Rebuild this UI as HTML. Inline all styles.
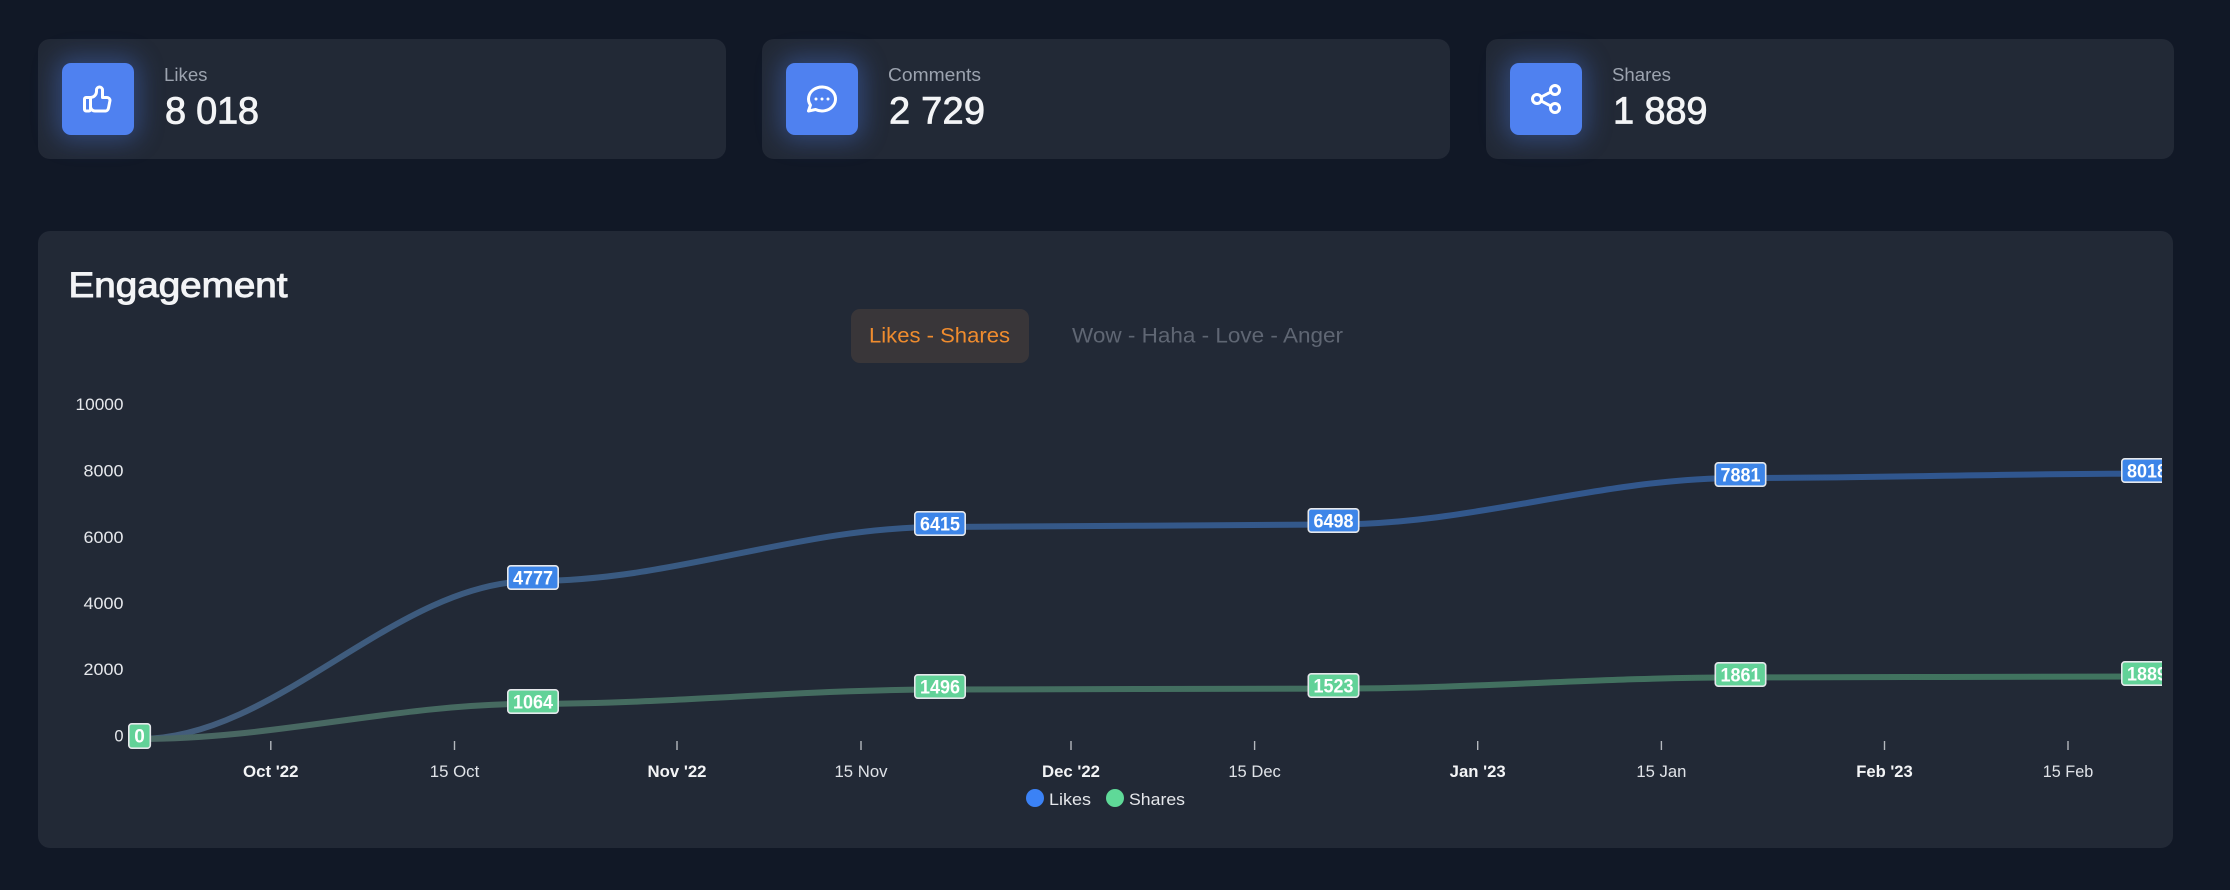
<!DOCTYPE html>
<html lang="en">
<head>
<meta charset="utf-8">
<title>Engagement</title>
<style>
html,body{margin:0;padding:0;background:#111826;}
body{position:relative;width:2230px;height:890px;overflow:hidden;font-family:"Liberation Sans",sans-serif;}
.card{position:absolute;top:39px;width:688px;height:120px;background:#222936;border-radius:12px;}
.ib{position:absolute;left:24px;top:24px;width:72px;height:72px;border-radius:9px;background:#4f81f0;box-shadow:0 0 24px 6px rgba(79,129,240,.34);}
.ib svg{position:absolute;left:18px;top:18px;width:36px;height:36px;fill:none;stroke:#fff;stroke-width:2;stroke-linecap:round;stroke-linejoin:round;}
.panel{position:absolute;left:38px;top:231px;width:2135px;height:617px;background:#222936;border-radius:12px;}
.pill{position:absolute;left:851px;top:309px;width:178px;height:54px;background:#393639;border-radius:9px;}
svg.o{position:absolute;left:0;top:0;width:2230px;height:890px;font-family:"Liberation Sans",sans-serif;}
.lab{font-size:18px;fill:#9ca3af;}
.val{font-size:38px;fill:#f3f4f6;stroke:#f3f4f6;stroke-width:.8px;}
.y{font-size:16.5px;fill:#e5e7eb;text-anchor:end;}
.x{font-size:16.5px;fill:#e0e3e8;text-anchor:middle;}
.xb{font-size:16.5px;font-weight:700;fill:#f3f4f6;text-anchor:middle;}
.dl{font-size:19px;font-weight:700;fill:#fff;text-anchor:middle;}
.leg{font-size:17px;fill:#e5e7eb;}
.bb{fill:#3d85e8;stroke:#e5e7eb;stroke-width:1.6;}
.gb{fill:#62d298;stroke:#e5e7eb;stroke-width:1.6;}
.t{stroke:#b4b8be;stroke-width:1.4;}
</style>
</head>
<body>
<div class="card" style="left:38px"><div class="ib"><svg viewBox="0 0 24 24"><path d="M7 11v8a1 1 0 0 1-1 1h-2a1 1 0 0 1-1-1v-7a1 1 0 0 1 1-1h3a4 4 0 0 0 4-4v-1a2 2 0 0 1 4 0v5h3a2 2 0 0 1 2 2l-1 5a2 3 0 0 1-2 2h-7a3 3 0 0 1-3-3"/></svg></div></div>
<div class="card" style="left:762px"><div class="ib"><svg viewBox="0 0 24 24"><path d="M3 20l1.3-3.9c-2.324-3.437-1.426-7.872 2.1-10.374c3.526-2.501 8.59-2.296 11.845.48c3.255 2.777 3.695 7.266 1.029 10.501c-2.666 3.235-7.615 4.215-11.574 2.293l-4.7 1"/><path d="M12 12v.01M8 12v.01M16 12v.01"/></svg></div></div>
<div class="card" style="left:1486px"><div class="ib"><svg viewBox="0 0 24 24"><circle cx="6" cy="12" r="3"/><circle cx="18" cy="6" r="3"/><circle cx="18" cy="18" r="3"/><path d="M8.7 10.7l6.6-3.4M8.7 13.3l6.6 3.4"/></svg></div></div>
<div class="panel"></div>
<div class="pill"></div>
<svg class="o" viewBox="0 0 2230 890" xmlns="http://www.w3.org/2000/svg">
<defs>
<linearGradient id="gB" gradientUnits="userSpaceOnUse" x1="139" y1="0" x2="2147" y2="0"><stop offset="0" stop-color="#445d7a"/><stop offset=".2" stop-color="#3a5a80"/><stop offset=".5" stop-color="#34588a"/><stop offset="1" stop-color="#2f5690"/></linearGradient>
<linearGradient id="gG" gradientUnits="userSpaceOnUse" x1="139" y1="0" x2="2147" y2="0"><stop offset="0" stop-color="#4a6663"/><stop offset=".2" stop-color="#456b60"/><stop offset="1" stop-color="#40745f"/></linearGradient>
<clipPath id="cl"><rect x="60" y="380" width="2102" height="400"/></clipPath>
</defs>

<text class="lab" x="164" y="81" textLength="43.5" lengthAdjust="spacingAndGlyphs">Likes</text>
<text class="val" x="165" y="123.5" textLength="94" lengthAdjust="spacing">8 018</text>
<text class="lab" x="888" y="81" textLength="93" lengthAdjust="spacingAndGlyphs">Comments</text>
<text class="val" x="889" y="123.5" textLength="96" lengthAdjust="spacing">2 729</text>
<text class="lab" x="1612" y="81" textLength="59" lengthAdjust="spacingAndGlyphs">Shares</text>
<text class="val" x="1613" y="123.5" textLength="94.5" lengthAdjust="spacing">1 889</text>

<text x="68.5" y="297" font-size="35" fill="#f3f4f6" stroke="#f3f4f6" stroke-width="1" textLength="219" lengthAdjust="spacingAndGlyphs">Engagement</text>
<text x="869" y="342.5" font-size="21" fill="#f08c2e" textLength="141" lengthAdjust="spacingAndGlyphs">Likes - Shares</text>
<text x="1072" y="342.5" font-size="21" fill="#5f6673" textLength="271" lengthAdjust="spacingAndGlyphs">Wow - Haha - Love - Anger</text>

<text class="y" x="123.5" y="410" textLength="48" lengthAdjust="spacingAndGlyphs">10000</text>
<text class="y" x="123.5" y="476.5" textLength="40" lengthAdjust="spacingAndGlyphs">8000</text>
<text class="y" x="123.5" y="543" textLength="40" lengthAdjust="spacingAndGlyphs">6000</text>
<text class="y" x="123.5" y="609" textLength="40" lengthAdjust="spacingAndGlyphs">4000</text>
<text class="y" x="123.5" y="675" textLength="40" lengthAdjust="spacingAndGlyphs">2000</text>
<text class="y" x="123.5" y="741.5">0</text>

<g class="t">
<line x1="270.8" x2="270.8" y1="741" y2="750"/><line x1="454.5" x2="454.5" y1="741" y2="750"/>
<line x1="677" x2="677" y1="741" y2="750"/><line x1="861" x2="861" y1="741" y2="750"/>
<line x1="1071" x2="1071" y1="741" y2="750"/><line x1="1254.6" x2="1254.6" y1="741" y2="750"/>
<line x1="1477.7" x2="1477.7" y1="741" y2="750"/><line x1="1661.4" x2="1661.4" y1="741" y2="750"/>
<line x1="1884.5" x2="1884.5" y1="741" y2="750"/><line x1="2068" x2="2068" y1="741" y2="750"/>
</g>
<text class="xb" x="270.8" y="777" textLength="55.5" lengthAdjust="spacingAndGlyphs">Oct '22</text>
<text class="x" x="454.5" y="777" textLength="49.5" lengthAdjust="spacingAndGlyphs">15 Oct</text>
<text class="xb" x="677" y="777" textLength="59" lengthAdjust="spacingAndGlyphs">Nov '22</text>
<text class="x" x="861" y="777" textLength="53" lengthAdjust="spacingAndGlyphs">15 Nov</text>
<text class="xb" x="1071" y="777" textLength="58" lengthAdjust="spacingAndGlyphs">Dec '22</text>
<text class="x" x="1254.6" y="777" textLength="52.5" lengthAdjust="spacingAndGlyphs">15 Dec</text>
<text class="xb" x="1477.7" y="777" textLength="56" lengthAdjust="spacingAndGlyphs">Jan '23</text>
<text class="x" x="1661.4" y="777" textLength="50" lengthAdjust="spacingAndGlyphs">15 Jan</text>
<text class="xb" x="1884.5" y="777" textLength="56.5" lengthAdjust="spacingAndGlyphs">Feb '23</text>
<text class="x" x="2068" y="777" textLength="50.5" lengthAdjust="spacingAndGlyphs">15 Feb</text>

<circle cx="1035" cy="798" r="9" fill="#3b82f6"/>
<text class="leg" x="1049" y="805" textLength="42" lengthAdjust="spacingAndGlyphs">Likes</text>
<circle cx="1115" cy="798" r="9" fill="#5fd998"/>
<text class="leg" x="1129" y="805" textLength="56" lengthAdjust="spacingAndGlyphs">Shares</text>

<path fill="none" stroke="url(#gB)" stroke-width="6" d="M139.5 739C277.2 739 395.3 581 533 581C675.5 581 797.6 527 940 527C1077.7 527 1195.8 524.5 1333.5 524.5C1476 524.5 1598 478 1740.5 478C1882.8 478 2004.7 473.6 2147 473.6"/>
<path fill="none" stroke="url(#gG)" stroke-width="6" d="M139.5 739C277.2 739 395.3 703.8 533 703.8C675.5 703.8 797.6 689.5 940 689.5C1077.7 689.5 1195.8 688.6 1333.5 688.6C1476 688.6 1598 677.4 1740.5 677.4C1882.8 677.4 2004.7 676.5 2147 676.5"/>

<g clip-path="url(#cl)">
<rect class="gb" x="128.8" y="723.8" width="21.5" height="24.4" rx="3"/><text class="dl" x="139.5" y="742.5">0</text>

<rect class="bb" x="507.8" y="565.8" width="50.4" height="23.4" rx="3"/><text class="dl" x="533" y="584.5" textLength="40" lengthAdjust="spacingAndGlyphs">4777</text>
<rect class="bb" x="914.8" y="511.8" width="50.4" height="23.4" rx="3"/><text class="dl" x="940" y="530.5" textLength="40" lengthAdjust="spacingAndGlyphs">6415</text>
<rect class="bb" x="1308.3" y="508.8" width="50.4" height="23.4" rx="3"/><text class="dl" x="1333.5" y="527.5" textLength="40" lengthAdjust="spacingAndGlyphs">6498</text>
<rect class="bb" x="1715.3" y="462.8" width="50.4" height="23.4" rx="3"/><text class="dl" x="1740.5" y="481.5" textLength="40" lengthAdjust="spacingAndGlyphs">7881</text>
<rect class="bb" x="2121.8" y="458.8" width="50.4" height="23.4" rx="3"/><text class="dl" x="2147" y="477.5" textLength="40" lengthAdjust="spacingAndGlyphs">8018</text>

<rect class="gb" x="507.8" y="689.8" width="50.4" height="23.4" rx="3"/><text class="dl" x="533" y="708.5" textLength="40" lengthAdjust="spacingAndGlyphs">1064</text>
<rect class="gb" x="914.8" y="674.8" width="50.4" height="23.4" rx="3"/><text class="dl" x="940" y="693.5" textLength="40" lengthAdjust="spacingAndGlyphs">1496</text>
<rect class="gb" x="1308.3" y="673.8" width="50.4" height="23.4" rx="3"/><text class="dl" x="1333.5" y="692.5" textLength="40" lengthAdjust="spacingAndGlyphs">1523</text>
<rect class="gb" x="1715.3" y="662.8" width="50.4" height="23.4" rx="3"/><text class="dl" x="1740.5" y="681.5" textLength="40" lengthAdjust="spacingAndGlyphs">1861</text>
<rect class="gb" x="2121.8" y="661.8" width="50.4" height="23.4" rx="3"/><text class="dl" x="2147" y="680.5" textLength="40" lengthAdjust="spacingAndGlyphs">1889</text>
</g>
</svg>
</body>
</html>
